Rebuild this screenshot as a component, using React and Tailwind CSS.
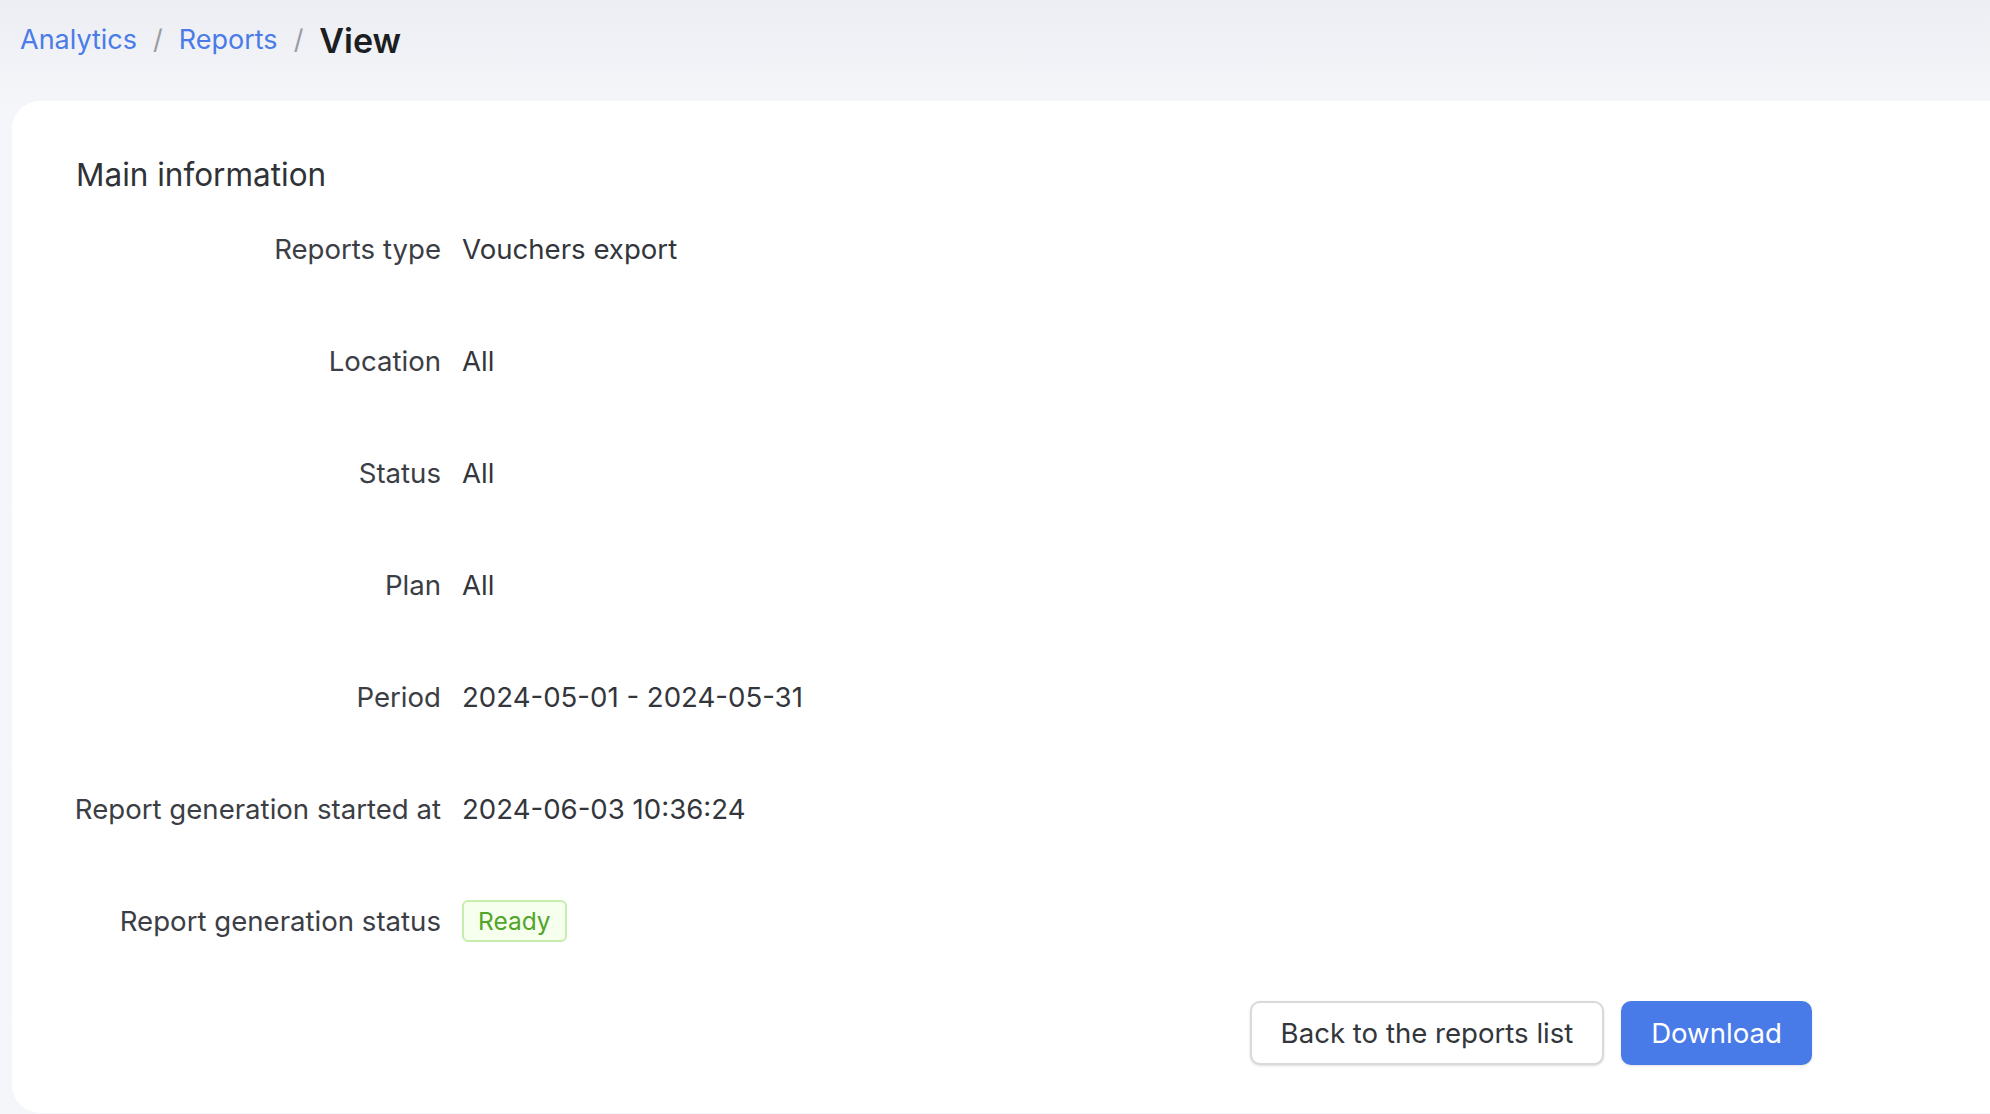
const rows = [
  { label: 'Reports type', value: 'Vouchers export' },
  { label: 'Location', value: 'All' },
  { label: 'Status', value: 'All' },
  { label: 'Plan', value: 'All' },
  { label: 'Period', value: '2024-05-01 - 2024-05-31' },
  { label: 'Report generation started at', value: '2024-06-03 10:36:24' },
];

const InfoRow = ({ label, children }) => (
  <div className="flex items-center h-[42px]">
    <div className="w-[365px] shrink-0 flex justify-end whitespace-nowrap text-[#3b3e44]">{label}</div>
    <div className="pl-[21px] text-[#33363b]">{children}</div>
  </div>
);

export default function App() {
  return (
    <div
      className="min-h-screen w-full bg-gradient-to-b from-[#eceef3] to-[#f5f6fa] to-[110px] overflow-hidden"
      style={{ fontFamily: 'Inter, "Noto Sans", sans-serif' }}
    >
      <nav className="flex items-center h-[82px] pl-[20px] pb-[2px] text-[27px]">
        <a className="text-[#4a7be8] cursor-pointer">Analytics</a>
        <span className="mx-[16px] text-[#9a9ca1]">/</span>
        <a className="text-[#4a7be8] cursor-pointer">Reports</a>
        <span className="mx-[16px] text-[#9a9ca1]">/</span>
        <span className="text-[34px] font-semibold text-[#1c1e21]">View</span>
      </nav>

      <div className="ml-[12px] mt-[19px] bg-white rounded-l-[28px] pt-[54px] pb-[48px] pl-[64px]">
        <div className="w-[1736px]">
          <h2 className="text-[31.5px] font-normal leading-[40px] text-[#2f3236]">Main information</h2>

          <div className="mt-[33px] flex flex-col gap-[70px] text-[27.6px] leading-[40px]">
            {rows.map((r) => (
              <InfoRow key={r.label} label={r.label}>
                {r.value}
              </InfoRow>
            ))}
            <InfoRow label="Report generation status">
              <span className="inline-flex items-center h-[42px] px-[14px] rounded-[6px] border-2 border-[#c6eeab] bg-[#f6ffed] text-[24.5px] text-[#52a52a]">
                Ready
              </span>
            </InfoRow>

            <div className="-mt-[11px] flex justify-end gap-[17px]">
              <button className="h-[64px] w-[354px] rounded-[10px] border-2 border-[#d9d9d9] bg-white text-[27.6px] text-[#33363b] shadow-sm">
                Back to the reports list
              </button>
              <button className="h-[64px] w-[191px] rounded-[10px] bg-[#487be8] text-[27.6px] text-white shadow-sm">
                Download
              </button>
            </div>
          </div>
        </div>
      </div>
    </div>
  );
}
